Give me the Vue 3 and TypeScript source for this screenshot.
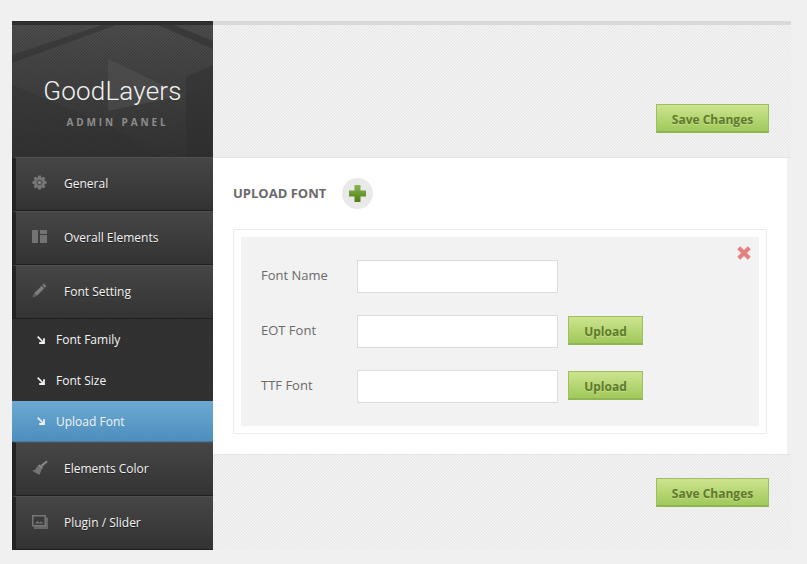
<script setup lang="ts">
interface NavItem { label: string; icon: string }
const topNav: NavItem[] = [
  { label: 'General', icon: 'gear' },
  { label: 'Overall Elements', icon: 'layout' },
  { label: 'Font Setting', icon: 'pencil' },
]
const subNav = ['Font Family', 'Font Size', 'Upload Font']
const bottomNav: NavItem[] = [
  { label: 'Elements Color', icon: 'brush' },
  { label: 'Plugin / Slider', icon: 'slider' },
]
const fields = [
  { label: 'Font Name', upload: false },
  { label: 'EOT Font', upload: true },
  { label: 'TTF Font', upload: true },
]
</script>

<template>
  <div class="page">
    <aside class="sidebar">
      <div class="brand">
        <svg class="brand-art" width="201" height="132" viewBox="0 0 201 132" aria-hidden="true">
          <path d="M0 30 L90 0 L104 0 L0 38 Z" fill="#2e2e2e" opacity=".5" />
          <path d="M162 0 L201 16 L201 24 L146 0 Z" fill="#2e2e2e" opacity=".55" />
          <path d="M96 34 L172 70 L96 86 Z" fill="#5a5a5a" opacity=".4" />
          <path d="M0 60 L96 100 L150 132 L0 132 Z" fill="#2f2f2f" opacity=".3" />
          <path d="M174 52 L201 40 L201 132 L174 132 Z" fill="#2a2a2a" opacity=".4" />
        </svg>
        <div class="brand-name">GoodLayers</div>
        <div class="brand-sub">ADMIN PANEL</div>
      </div>

      <nav class="nav">
        <a v-for="item in topNav" :key="item.label" class="nav-item">
          <span class="nav-icon">
            <svg v-if="item.icon === 'gear'" width="15" height="15" viewBox="0 0 15 15">
              <g fill="#777">
                <circle cx="7.500" cy="7.500" r="5.500" />
                <rect x="6" y=".5" width="3" height="14" />
                <rect x=".5" y="6" width="14" height="3" />
                <rect x="6" y=".5" width="3" height="14" transform="rotate(45 7.500 7.500)" />
                <rect x="6" y=".5" width="3" height="14" transform="rotate(-45 7.500 7.500)" />
              </g>
              <circle cx="7.500" cy="7.500" r="3" fill="#555" />
              <circle cx="7.500" cy="7.500" r="1.500" fill="#8a8a8a" />
            </svg>
            <svg v-else-if="item.icon === 'layout'" width="15" height="13" viewBox="0 0 15 13">
              <rect x="0" y="0" width="6" height="13" fill="#737373" />
              <rect x="8" y="0" width="7" height="4" fill="#737373" />
              <rect x="8" y="5" width="7" height="8" fill="#737373" />
            </svg>
            <svg v-else width="15" height="15" viewBox="0 0 15 15">
              <path fill="#7d7d7d" d="M11.800.6l2.600 2.600-1.500 1.500-2.600-2.600zM9.700 2.700l2.600 2.600-7.600 7.600-2.600-2.600z" />
              <path fill="#666" d="M1.700 10.700l2.600 2.600-3.800 1.300z" />
            </svg>
          </span>
          <span>{{ item.label }}</span>
        </a>

        <div class="sub-nav">
          <a v-for="sub in subNav" :key="sub" class="sub-item" :class="{ active: sub === 'Upload Font' }">
            <svg class="sub-arrow" width="8" height="8" viewBox="0 0 8 8">
              <path d="M.7.7L6 6" fill="none" stroke="#f0f0f0" stroke-width="1.700" />
              <path d="M7 2.200V7H2.200" fill="none" stroke="#f0f0f0" stroke-width="1.800" />
            </svg>
            <span>{{ sub }}</span>
          </a>
        </div>

        <a v-for="item in bottomNav" :key="item.label" class="nav-item">
          <span class="nav-icon">
            <svg v-if="item.icon === 'brush'" width="16" height="15" viewBox="0 0 16 15">
              <path fill="#858585" d="M14.400.6l1.300 1.400-5.600 5-1.800-1.800z" />
              <path fill="#949494" d="M7.300 4.500l3.600 3.300-1 1.200-3.800-3.300z" />
              <path fill="#747474" d="M5.800 5.800l4 3.400L7.500 14.700 3.800 13 .2 10.700 3 9.800z" />
            </svg>
            <svg v-else width="16" height="14" viewBox="0 0 16 14">
              <rect x="2" y="2.500" width="14" height="11.500" fill="#666" />
              <rect x="0" y="0" width="14" height="11.500" fill="#777" />
              <rect x="1.500" y="1.500" width="11" height="8.500" fill="#3a3a3a" />
              <path d="M3 8.500l2.500-2.500 2 1.700 1.500-1.200 2.500 2z" fill="#777" />
            </svg>
          </span>
          <span>{{ item.label }}</span>
        </a>
      </nav>
    </aside>

    <main class="main">
      <header class="band band-top">
        <button class="btn btn-save" type="button">Save Changes</button>
      </header>

      <section class="panel">
        <div class="panel-title">
          <h2>UPLOAD FONT</h2>
          <span class="add-circle">
            <svg width="17" height="17" viewBox="0 0 17 17">
              <defs>
                <linearGradient id="plusGrad" x1="0" y1="0" x2="0" y2="1">
                  <stop offset="0" stop-color="#8cb552" />
                  <stop offset="1" stop-color="#4e7d14" />
                </linearGradient>
              </defs>
              <path fill="url(#plusGrad)" d="M5.500 0h6v5.500H17v6h-5.500V17h-6v-5.500H0v-6h5.500z" />
            </svg>
          </span>
        </div>

        <div class="card">
          <div class="card-inner">
            <svg class="close" width="14" height="14" viewBox="0 0 14 14">
              <path fill="#e57f80" d="M3.200 .3L7 4.100 10.800 .3 13.700 3.200 9.900 7l3.800 3.800-2.900 2.900L7 9.900l-3.800 3.800L.3 10.800 4.100 7 .3 3.200z" />
            </svg>
            <div v-for="f in fields" :key="f.label" class="row">
              <label class="row-label">{{ f.label }}</label>
              <input class="row-input" type="text" />
              <button v-if="f.upload" class="btn btn-upload" type="button">Upload</button>
            </div>
          </div>
        </div>
      </section>

      <footer class="band band-bottom">
        <button class="btn btn-save" type="button">Save Changes</button>
      </footer>
    </main>
  </div>
</template>

<style>
html, body { background: #f0f0f0; }
</style>

<style scoped>
.page {
  display: flex;
  height: 564px;
  box-sizing: border-box;
  padding: 21px 16px 14px 12px;
  font-family: "Open Sans", "Liberation Sans", sans-serif;
  background: #f0f0f0;
  overflow: hidden;
}
.sidebar {
  width: 201px;
  flex: none;
  background-color: #333;
  background-image: repeating-linear-gradient(135deg, rgba(0,0,0,.16) 0 .707px, transparent .707px 2.121px);
}
.brand {
  position: relative;
  height: 136px;
  box-sizing: border-box;
  border-top: 4px solid #2e2e2e;
  overflow: hidden;
  background-color: #3c3c3c;
  background-image:
    repeating-linear-gradient(135deg, rgba(0,0,0,.14) 0 .707px, transparent .707px 2.121px),
    linear-gradient(#4c4c4c, #333);
  display: flex;
  flex-direction: column;
  align-items: center;
}
.brand-art { position: absolute; left: 0; top: 0; }
.brand-name {
  position: relative;
  margin-top: 49px;
  font-family: Roboto, "Open Sans", sans-serif;
  font-weight: 300;
  font-size: 26px;
  line-height: 34px;
  letter-spacing: .2px;
  color: #f2f2f2;
}
.brand-sub {
  position: relative;
  margin-top: 7px;
  margin-left: 10px;
  font-size: 10px;
  line-height: 14px;
  font-weight: 700;
  letter-spacing: 2.900px;
  color: #8d8d8d;
}
.nav { display: flex; flex-direction: column; }
.nav-item {
  display: flex;
  align-items: center;
  box-sizing: border-box;
  height: 54px;
  padding-bottom: 2px;
  border-left: 4px solid #232323;
  border-top: 1px solid #505050;
  border-bottom: 1px solid #1f1f1f;
  background: linear-gradient(#464646, #333);
  color: #f4f4f4;
  font-size: 12px;
  text-shadow: 0 1px 0 #222;
}
.nav-icon {
  width: 48px;
  padding-left: 16px;
  box-sizing: border-box;
  display: flex;
  align-items: center;
  margin-top: -1px;
}
.sub-nav { display: flex; flex-direction: column; }
.sub-item {
  display: flex;
  align-items: center;
  height: 41px;
  padding-left: 25px;
  color: #f4f4f4;
  font-size: 12px;
}
.sub-arrow { margin-right: 11px; }
.sub-item.active {
  background-color: #5a9ccb;
  background-image:
    repeating-linear-gradient(135deg, rgba(255,255,255,.05) 0 .707px, transparent .707px 2.121px),
    linear-gradient(#6aa8d2, #4a8cbc);
  border-bottom: 1px solid #3f7ba6;
  box-sizing: border-box;
}
.main {
  flex: 1;
  min-width: 0;
  display: flex;
  flex-direction: column;
  border-top: 4px solid #d9d9d9;
  background: #f0f0f0;
}
.band {
  display: flex;
  justify-content: flex-end;
  box-sizing: border-box;
  padding-right: 22px;
  background-color: #f2f2f2;
  background-image: repeating-linear-gradient(135deg, #e6e6e6 0 .707px, transparent .707px 2.121px);
}
.band-top {
  height: 133px;
  padding-top: 79px;
  border-bottom: 1px solid #e4e4e4;
}
.band-bottom {
  flex: 1;
  padding-top: 23px;
  border-top: 1px solid #e4e4e4;
}
.btn {
  box-sizing: border-box;
  height: 29px;
  padding: 2px 0 0;
  border: 1px solid #9dbf62;
  border-bottom: 2px solid #8fb552;
  background: linear-gradient(#cde48f, #a0c95a);
  color: #5f7a2a;
  font-family: inherit;
  font-weight: 700;
  font-size: 12px;
  text-shadow: 0 1px 0 rgba(255,255,255,.25);
}
.btn-save { width: 113px; }
.btn-upload { width: 75px; margin-left: 10px; margin-top: -2px; }
.panel {
  height: 296px;
  box-sizing: border-box;
  margin-right: 4px;
  background: #fff;
  padding: 20px 20px 0;
}
.panel-title {
  display: flex;
  align-items: center;
  height: 31px;
}
.panel-title h2 {
  margin: -2px 0 0;
  width: 109px;
  font-size: 13px;
  font-weight: 700;
  color: #6a6a6a;
}
.add-circle {
  width: 31px;
  height: 31px;
  border-radius: 50%;
  background: #e9e9e9;
  display: flex;
  align-items: center;
  justify-content: center;
}
.card {
  margin-top: 20px;
  box-sizing: border-box;
  width: 534px;
  height: 205px;
  border: 1px solid #ececec;
  padding: 7px;
}
.card-inner {
  position: relative;
  height: 189px;
  box-sizing: border-box;
  padding-top: 23px;
  background: #f2f2f2;
  display: flex;
  flex-direction: column;
  gap: 22px;
}
.close { position: absolute; right: 8px; top: 9px; }
.row {
  display: flex;
  align-items: center;
  height: 33px;
  padding-left: 20px;
}
.row-label {
  width: 96px;
  margin-top: -4px;
  font-size: 13px;
  color: #6a6a6a;
}
.row-input {
  box-sizing: border-box;
  width: 201px;
  height: 33px;
  border: 1px solid #dcdcdc;
  background: #fff;
  outline: none;
}
</style>
